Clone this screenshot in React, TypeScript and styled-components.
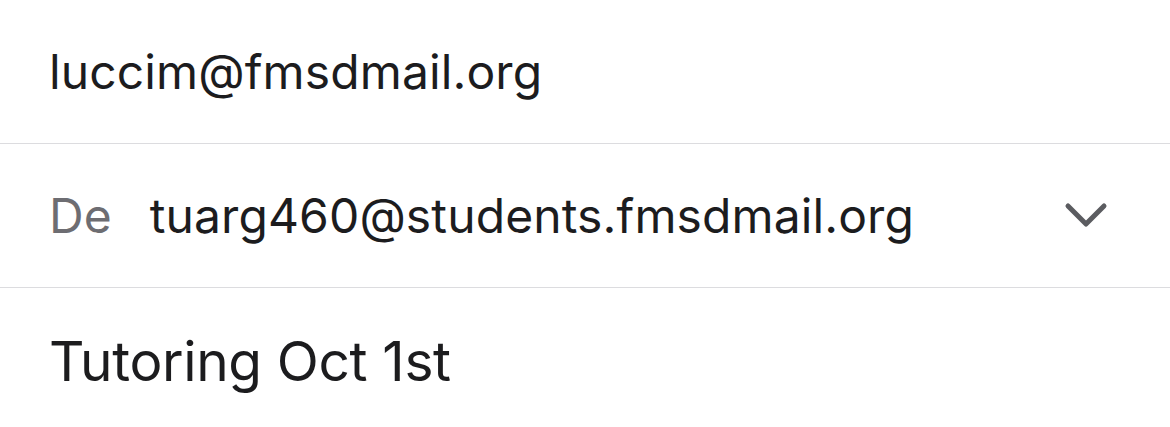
import React from 'react'
import styled, { createGlobalStyle } from 'styled-components'

const GlobalStyle = createGlobalStyle`
  html, body {
    margin: 0;
    padding: 0;
    background: #ffffff;
  }
  body {
    font-family: Inter, "Noto Sans", sans-serif;
    -webkit-font-smoothing: antialiased;
  }
`

function Chevron() {
  return (
    <svg width='44' height='30' viewBox='0 0 44 30'>
      <path d='M4 5 L22 23 L40 5' fill='none' stroke='#5b5c60' strokeWidth='5' strokeLinecap='round' strokeLinejoin='round' />
    </svg>
  )
}

export default function App() {
  return (
    <>
      <GlobalStyle />
      <Form>
        <Row>
          <Value>luccim@fmsdmail.org</Value>
        </Row>
        <Row>
          <Label>De</Label>
          <Value>tuarg460@students.fmsdmail.org</Value>
          <Spacer />
          <ChevronWrap>
            <Chevron />
          </ChevronWrap>
        </Row>
        <Row $last>
          <Subject>Tutoring Oct 1st</Subject>
        </Row>
      </Form>
    </>
  )
}

const Form = styled.div`
  width: 1170px;
  height: 427px;
  overflow: hidden;
  display: flex;
  flex-direction: column;
`
const Row = styled.div<{ $last?: boolean }>`
  height: 144px;
  flex-shrink: 0;
  display: flex;
  align-items: center;
  padding: 0 0 0 49px;
  box-sizing: border-box;
  border-bottom: ${(p) => (p.$last ? 'none' : '1.5px solid #dcdcdf')};
`
const Label = styled.div`
  font-size: 48px;
  color: #6d6d72;
  margin-right: 38px;
`
const Value = styled.div`
  font-size: 48px;
  color: #1c1c1e;
  letter-spacing: 0.12px;
`
const Subject = styled.div`
  font-size: 55px;
  color: #1c1c1e;
  letter-spacing: -0.35px;
  margin-top: 2px;
`
const Spacer = styled.div`
  flex: 1;
`
const ChevronWrap = styled.div`
  display: flex;
  align-items: center;
  margin-right: 62px;
`
